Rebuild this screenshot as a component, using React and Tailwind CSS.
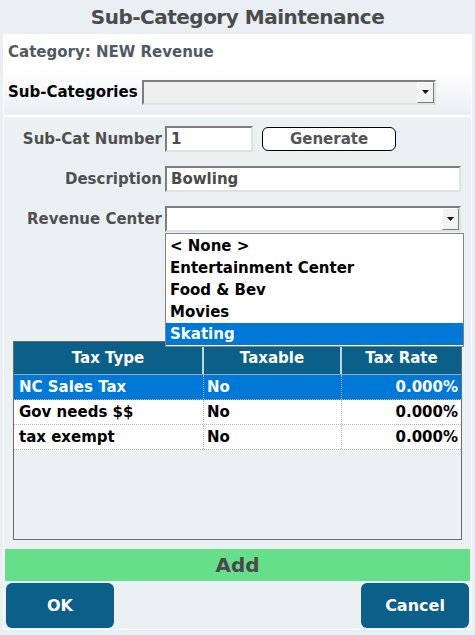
import React from 'react';

const taxes = [
  { type: 'NC Sales Tax', taxable: 'No', rate: '0.000%' },
  { type: 'Gov needs $$', taxable: 'No', rate: '0.000%' },
  { type: 'tax exempt', taxable: 'No', rate: '0.000%' },
];

const centers = ['< None >', 'Entertainment Center', 'Food & Bev', 'Movies', 'Skating'];

// Little drop arrow button used by both combo boxes
function DropButton() {
  return (
    <div className="w-[17px] h-full flex items-center justify-center bg-[#f3f3f3] border border-t-white border-l-white border-b-[#7a7a7a] border-r-[#7a7a7a]">
      <svg width="7" height="4" viewBox="0 0 7 4">
        <path d="M0 0h7L3.5 4z" fill="#111" />
      </svg>
    </div>
  );
}

function TextBox({ value, className }) {
  return (
    <div
      className={`h-[26px] bg-white border-2 border-t-[#7d7d7d] border-l-[#7d7d7d] border-b-[#e2e2e2] border-r-[#e2e2e2] flex items-center px-[4px] text-[15px] font-bold text-[#4a4a4a] ${className}`}
    >
      {value}
    </div>
  );
}

function FieldLabel({ children }) {
  return (
    <div className="w-[161px] pr-[3px] text-right text-[15px] font-bold text-[#4f4f4f] shrink-0">{children}</div>
  );
}

export default function App() {
  const selectedTax = 0;
  const highlighted = 4;

  return (
    <div className="w-[475px] h-[635px] bg-[#e9eff2] flex flex-col font-['DejaVu_Sans',sans-serif] overflow-hidden">
      {/* Title */}
      <div className="h-[35px] flex items-center justify-center text-[20px] font-bold text-[#4b4b4b] tracking-[-0.5px]">
        Sub-Category Maintenance
      </div>

      <div className="mx-[3px] mb-[5px] flex-1 border border-white bg-[#ebf0f3] flex flex-col">
        {/* Category header */}
        <div className="h-[34px] bg-white flex items-center px-[4px] text-[15px] font-bold text-[#505a63]">
          Category: NEW Revenue
        </div>

        {/* Sub-category picker */}
        <div className="h-[46px] bg-gradient-to-b from-white to-[#e9eff2] flex items-center px-[4px]">
          <span className="text-[15px] font-bold text-black">Sub-Categories</span>
          <div className="ml-[4px] w-[294px] h-[25px] bg-[#efefef] border-2 border-t-[#7d7d7d] border-l-[#7d7d7d] border-b-[#e2e2e2] border-r-[#e2e2e2] flex justify-end">
            <DropButton />
          </div>
        </div>
        <div className="h-[2px] bg-white" />

        {/* Form area */}
        <div className="relative flex-1 flex flex-col">
          <div className="mt-[9px] flex items-center">
            <FieldLabel>Sub-Cat Number</FieldLabel>
            <TextBox value="1" className="w-[88px]" />
            <button className="ml-[9px] w-[134px] h-[24px] rounded-[6px] border border-black bg-white text-[15px] font-bold text-[#555]">
              Generate
            </button>
          </div>

          <div className="mt-[14px] flex items-center">
            <FieldLabel>Description</FieldLabel>
            <TextBox value="Bowling" className="w-[296px]" />
          </div>

          <div className="mt-[14px] flex items-center">
            <FieldLabel>Revenue Center</FieldLabel>
            <div className="w-[296px] h-[26px] bg-white border-2 border-t-[#7d7d7d] border-l-[#7d7d7d] border-b-[#e2e2e2] border-r-[#e2e2e2] flex justify-end">
              <DropButton />
            </div>
          </div>

          {/* Tax table */}
          <div className="mt-[109px] ml-[9px] w-[449px] h-[199px] border border-[#6b6b6b] bg-[#ebf0f3]">
            <div className="h-[33px] bg-[#0a6089] flex text-white text-[15px] font-bold border-b border-[#9aa9b3]">
              <div className="w-[190px] flex items-center justify-center border-r-2 border-[#c7d2d9]">Tax Type</div>
              <div className="w-[138px] flex items-center justify-center border-r-2 border-[#c7d2d9]">Taxable</div>
              <div className="flex-1 flex items-center justify-center">Tax Rate</div>
            </div>
            {taxes.map((t, i) => (
              <div
                key={t.type}
                className={`h-[25px] flex text-[15px] font-bold border-b border-dotted border-[#b5b5b5] ${
                  i === selectedTax ? 'bg-[#0078d7] text-white' : 'bg-white text-black'
                }`}
              >
                <div className="w-[190px] px-[5px] flex items-center border-r border-dotted border-[#b5b5b5]">{t.type}</div>
                <div className="w-[138px] px-[3px] flex items-center border-r border-dotted border-[#b5b5b5]">{t.taxable}</div>
                <div className="flex-1 px-[3px] flex items-center justify-end">{t.rate}</div>
              </div>
            ))}
          </div>

          {/* Open revenue center list */}
          <div className="absolute left-[161px] top-[116px] w-[299px] bg-white border border-[#828282] py-[1px]">
            {centers.map((c, i) => (
              <div
                key={c}
                className={`h-[22px] px-[4px] flex items-center text-[15px] font-bold ${
                  i === highlighted ? 'bg-[#0078d7] text-white' : 'text-black'
                }`}
              >
                {c}
              </div>
            ))}
          </div>

          <button className="mt-[9px] mx-[1px] h-[32px] bg-[#66df8a] text-[20px] font-bold text-[#4a4a4a]">Add</button>

          <div className="mt-[2px] mb-[1px] px-[2px] flex justify-between">
            <button className="w-[108px] h-[45px] rounded-[6px] bg-[#0a6089] text-white text-[16px] font-bold">OK</button>
            <button className="w-[108px] h-[45px] rounded-[6px] bg-[#0a6089] text-white text-[16px] font-bold">Cancel</button>
          </div>
        </div>
      </div>
    </div>
  );
}
